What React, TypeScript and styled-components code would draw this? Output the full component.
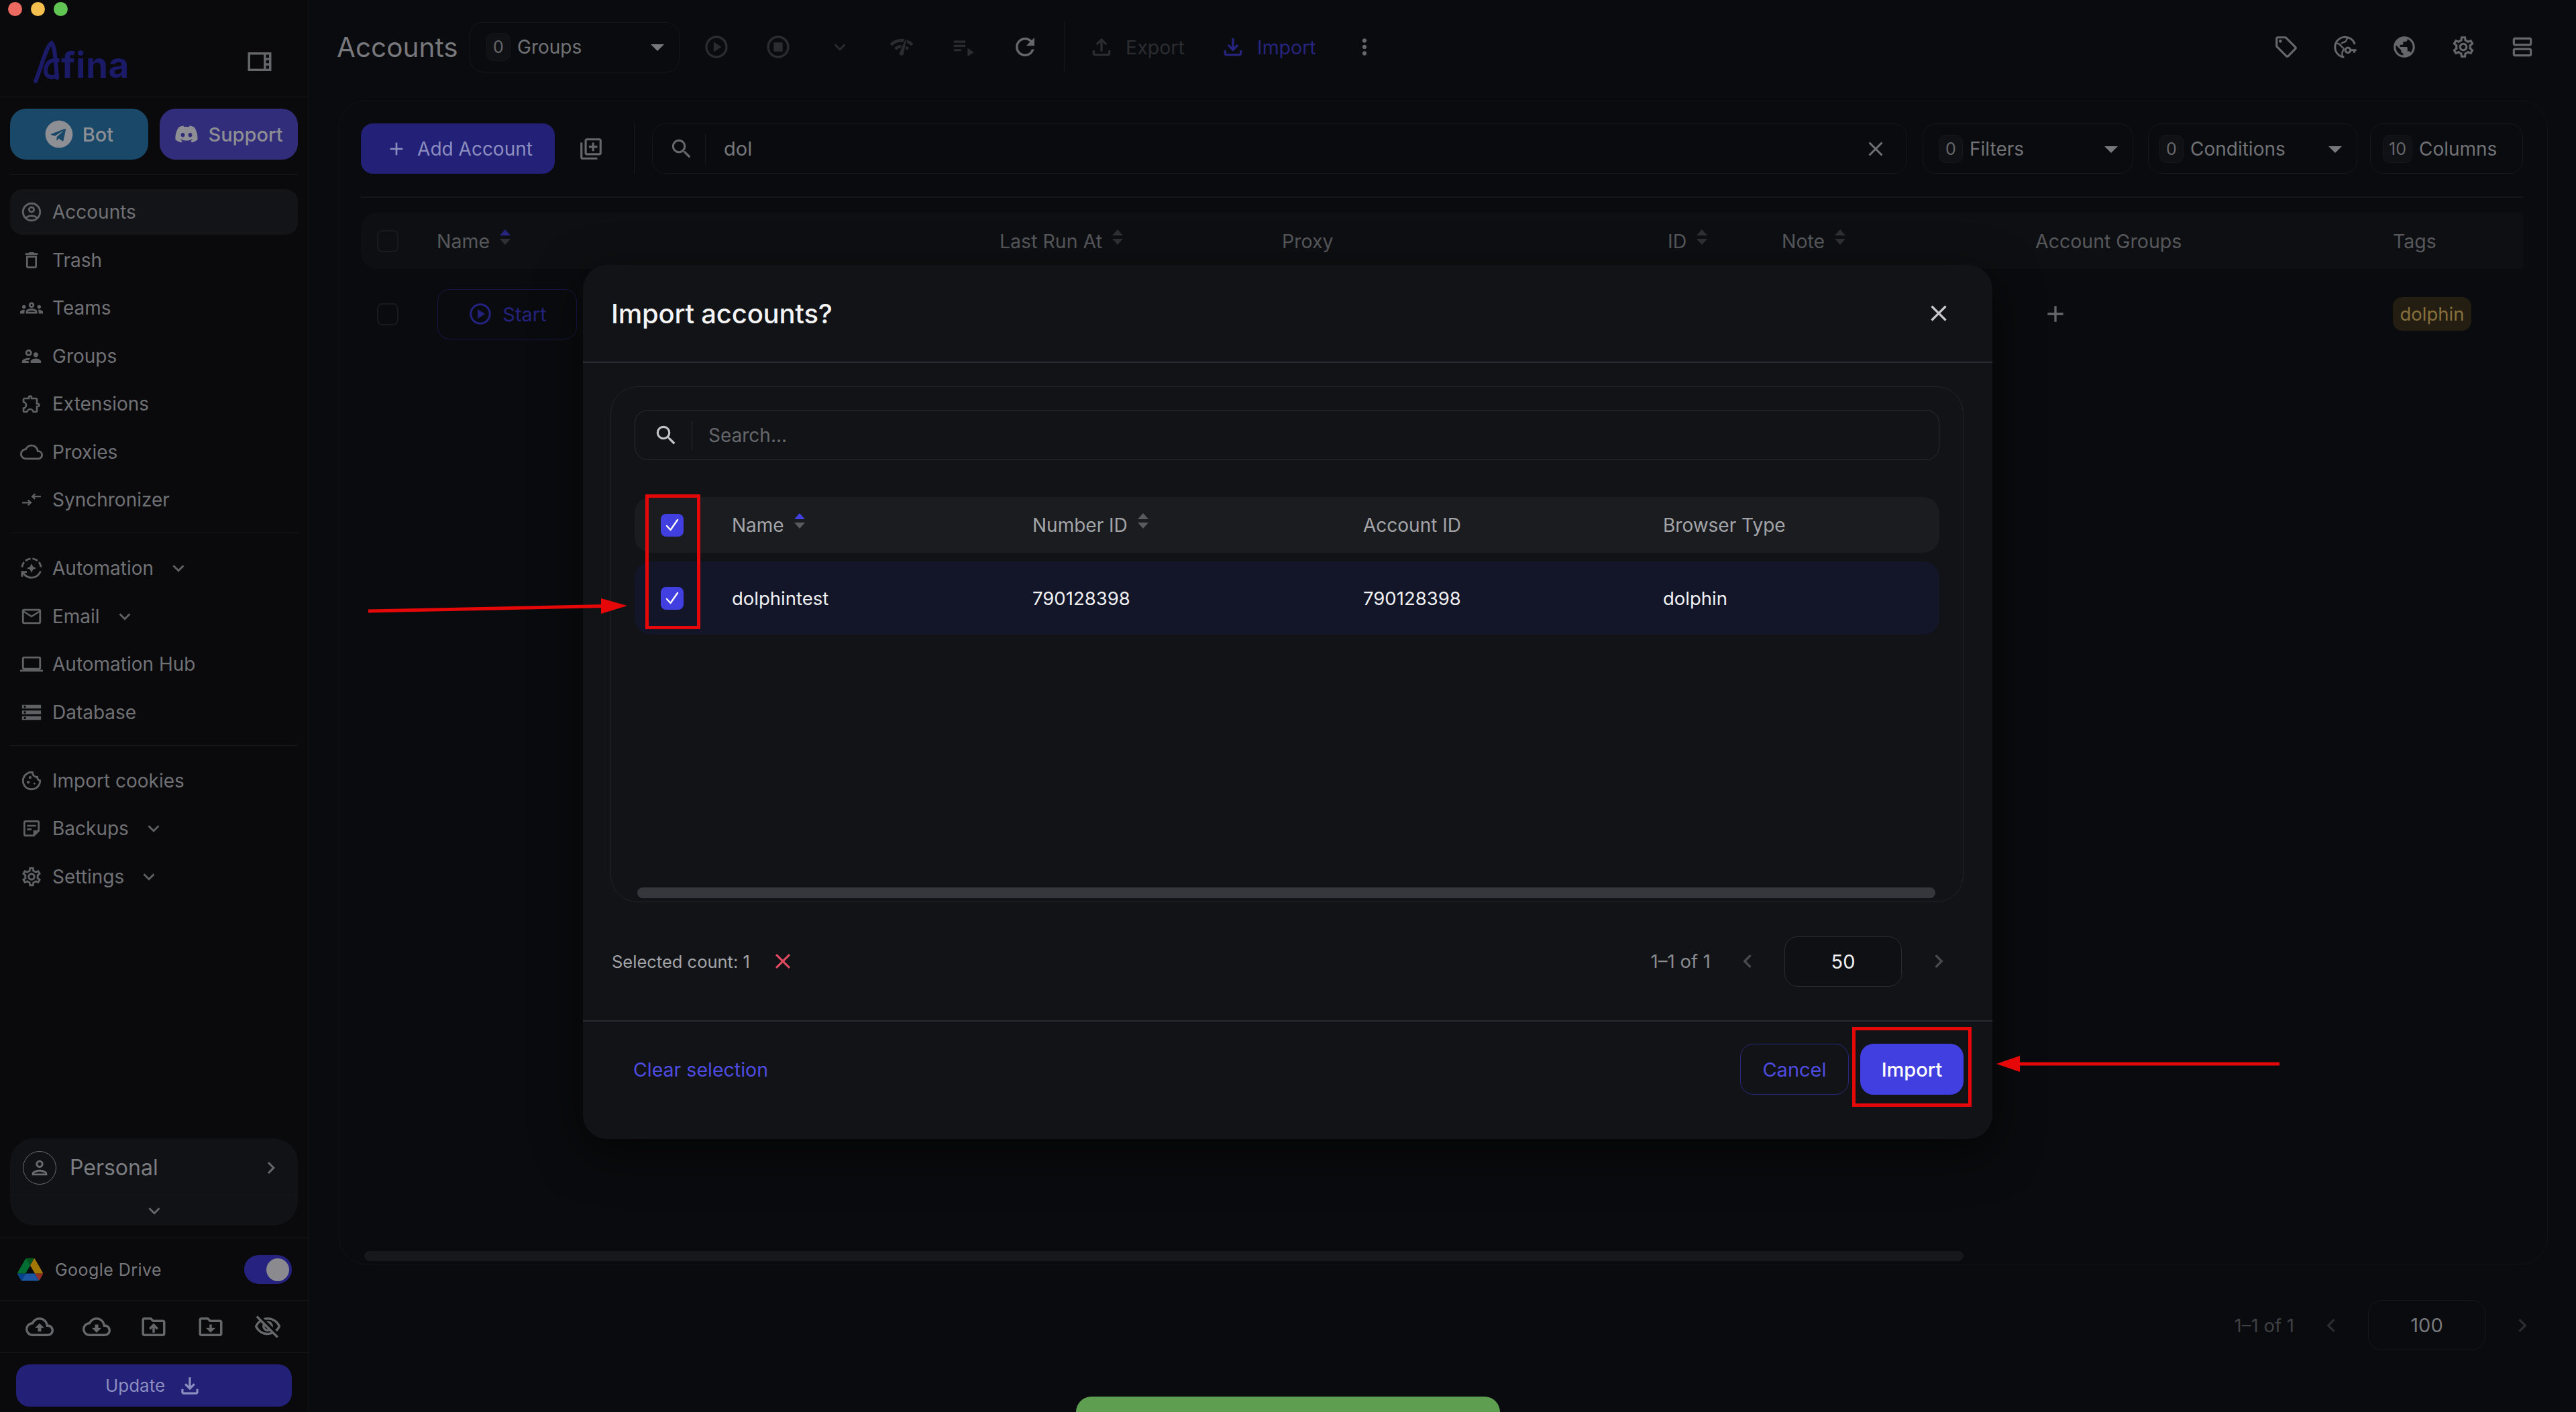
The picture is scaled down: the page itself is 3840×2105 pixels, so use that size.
import React from "react";
import styled, { createGlobalStyle } from "styled-components";
import {
  MdOutlineAccountCircle, MdOutlineDelete, MdOutlineGroups, MdOutlineSupervisorAccount, MdOutlineExtension,
  MdOutlineCloud, MdOutlineAutoMode, MdMailOutline, MdOutlineLaptop, MdOutlineStorage,
  MdOutlineCookie, MdOutlineStickyNote2, MdOutlineSettings, MdOutlineViewSidebar, MdOutlinePerson,
  MdOutlineCloudUpload, MdOutlineCloudDownload, MdOutlineDriveFolderUpload, MdOutlineVisibilityOff,
  MdOutlineFileDownload, MdOutlineFileUpload, MdOutlineLocalOffer, MdPublic, MdOutlineViewAgenda,
  MdOutlinePlayCircle, MdOutlineStopCircle, MdExpandMore, MdNetworkCheck, MdPlaylistPlay, MdRefresh,
  MdMoreVert, MdAdd, MdOutlineLibraryAdd, MdSearch, MdClose, MdChevronLeft, MdChevronRight, MdArrowDropDown,
} from "react-icons/md";
import { FaTelegram, FaDiscord } from "react-icons/fa";

const Global = createGlobalStyle`
  html, body { margin: 0; padding: 0; background: #0a0b0e; }
  body { font-family: Inter, "Noto Sans", "Liberation Sans", sans-serif; }
  * { box-sizing: border-box; }
`;

const Page = styled.div`
  position: relative; width: 3840px; height: 2105px; display: flex; overflow: hidden;
  background: #0a0b0e; color: #77787c;
`;

/* ---------- sidebar ---------- */
const Sidebar = styled.aside`
  width: 461px; height: 100%; flex: none; display: flex; flex-direction: column;
  border-right: 1px solid #15161a; background: #0a0a0d;
`;
const Lights = styled.div`display: flex; gap: 13px; padding: 3px 0 0 12px; height: 24px;`;
const Light = styled.span<{ $c: string }>`width: 21px; height: 21px; border-radius: 50%; background: ${p => p.$c};`;
const Brand = styled.div`
  height: 121px; display: flex; align-items: center; justify-content: space-between;
  padding: 16px 52px 0 50px; border-bottom: 1px solid #15161a; color: #66676b;
`;
const Logo = styled.div`display: flex; align-items: flex-end; height: 64px;`;
const LogoText = styled.span`
  font-size: 53px; font-weight: 700; color: #1b1a66; line-height: 54px; margin-left: -7px; letter-spacing: .5px;
`;
const Socials = styled.div`
  display: grid; grid-template-columns: 1fr 1fr; gap: 17px; padding: 17px 0 22px; margin: 0 16px 0 15px;
  border-bottom: 1px solid #17181c;
`;
const Social = styled.div<{ $bg: string }>`
  height: 76px; border-radius: 24px; background: ${p => p.$bg}; display: flex; align-items: center;
  justify-content: center; gap: 14px; font-size: 29px; font-weight: 500; color: #8d8f94;
`;
const NavGroup = styled.nav<{ $top?: number }>`
  display: flex; flex-direction: column; gap: 3.5px; padding: ${p => p.$top ?? 18}px 0 15px; margin: 0 16px 0 15px;
  border-bottom: 1px solid #17181c;
  &:last-of-type { border-bottom: none; }
`;
const NavItem = styled.div<{ $active?: boolean }>`
  height: 68px; display: flex; align-items: center; padding-left: 15px; gap: 14px; border-radius: 18px;
  font-size: 28px; color: #707175; background: ${p => (p.$active ? "#131417" : "transparent")};
`;
const NavIcon = styled.span`width: 34px; height: 34px; flex: none; display: flex; align-items: center; justify-content: center; color: #606165;`;
const NavChevron = styled.span`display: flex; margin-left: 6px; color: #606165;`;
const Spacer = styled.div`flex: 1;`;
const Workspace = styled.div`
  margin: 0 16px 18px 15px; height: 130px; border-radius: 36px; background: #111215; display: flex; flex-direction: column;
`;
const WorkspaceTop = styled.div`
  height: 85px; display: flex; align-items: center; padding: 3px 22px 0 19px; border-bottom: 1px solid #17181c; color: #77787c;
`;
const Avatar = styled.span`
  width: 50px; height: 50px; border: 1px solid #6b6c70; border-radius: 50%; display: flex; align-items: center;
  justify-content: center; color: #6b6c70; flex: none;
`;
const WorkspaceName = styled.span`margin-left: 20px; font-size: 32px; flex: 1; color: #7c7d81;`;
const WorkspaceBottom = styled.div`flex: 1; display: flex; align-items: center; justify-content: center; color: #66676b;`;
const SideRow = styled.div`border-top: 1px solid #15161a;`;
const DriveRow = styled(SideRow)`
  height: 93px; display: flex; align-items: center; padding: 1px 25px 0 26px; gap: 18px;
  font-size: 25px; letter-spacing: .45px; color: #77787c;
`;
const DriveLabel = styled.span`flex: 1;`;
const Toggle = styled.span`
  width: 71px; height: 43px; border-radius: 22px; background: #25237f; display: flex; align-items: center;
  justify-content: flex-end; padding-right: 4px;
`;
const Knob = styled.span`width: 34px; height: 34px; border-radius: 50%; background: #8b8b8f;`;
const SyncRow = styled(SideRow)`
  height: 78px; display: flex; align-items: center; padding-left: 38px; gap: 43px; color: #66676b;
`;
const UpdateRow = styled(SideRow)`padding: 17px 25px 8px 24px; height: 89px;`;
const UpdateButton = styled.div`
  height: 63px; border-radius: 20px; background: #232077; color: #8c8ec0; display: flex; align-items: center;
  justify-content: center; gap: 18px; font-size: 26px;
`;

/* ---------- main ---------- */
const Main = styled.main`flex: 1; min-width: 0; display: flex; flex-direction: column;`;
const TopBar = styled.header`height: 140px; flex: none; display: flex; align-items: center; padding: 0 36px 0 41px; margin-bottom: 10px;`;
const Title = styled.h1`margin: 0; font-size: 40.5px; font-weight: 400; color: #77787c; width: 198px; flex: none;`;
const Select = styled.div<{ $w: number; $h?: number }>`
  width: ${p => p.$w}px; height: 75px; flex: none; border: 1px solid #17181c; border-radius: 20px; display: flex;
  align-items: center; padding: 0 8px 0 ${p => p.$h ?? 16}px; font-size: 28px; color: #717276; background: #0a0b0e;
`;
const Count = styled.span`
  min-width: 36px; height: 42px; padding: 0 8px; border: 1px solid #16171b; border-radius: 10px; background: #101114;
  display: flex; align-items: center; justify-content: center; font-size: 25px; color: #66676b; margin-right: 10px;
`;
const SelectLabel = styled.span`flex: 1;`;
const ArrowIcon = styled.span`display: flex; color: #77787c;`;
const ToolGroup = styled.div`display: flex; margin-left: 9px;`;
const ToolButton = styled.span<{ $c?: string; $w?: number }>`
  width: ${p => p.$w ?? 92}px; height: 75px; display: flex; align-items: center; justify-content: center;
  color: ${p => p.$c ?? "#2b2c30"};
`;
const VDivider = styled.span<{ $m: string; $h?: number }>`
  width: 1px; height: ${p => p.$h ?? 75}px; background: #17181c; margin: ${p => p.$m}; flex: none;
`;
const TextTool = styled.span<{ $c: string; $w: number }>`
  display: flex; align-items: center; gap: 16px; font-size: 28.5px; color: ${p => p.$c}; width: ${p => p.$w}px; flex: none;
`;
const RightTools = styled.div`margin-left: auto; display: flex;`;

const Card = styled.section`
  margin: 0 42px 0 44px; height: 1735px; flex: none; border: 1px solid #121317; border-radius: 40px;
  padding: 34px 36px 4px 32px; display: flex; flex-direction: column; background: #0a0b0e;
`;
const Toolbar = styled.div`
  display: flex; align-items: center; height: 110px; padding-bottom: 35px; border-bottom: 2px solid #15161a; flex: none;
`;
const AddButton = styled.div`
  width: 289px; height: 75px; flex: none; border-radius: 18px; background: #232077; color: #8c8ec0; display: flex;
  align-items: center; justify-content: center; gap: 15px; font-size: 28px; padding-left: 4px;
`;
const IconBtn = styled.span`width: 118px; display: flex; justify-content: center; padding-right: 10px; color: #66676b; flex: none;`;
const SearchBox = styled.div`
  flex: 1; height: 75px; margin: 0 23px 0 26px; border: 1px solid #15161a; border-radius: 20px; display: flex;
  align-items: center; padding: 0 28px 0 24px; font-size: 29px; color: #77787c;
`;
const SearchDivider = styled.span`width: 1px; height: 48px; background: #15161a; margin: 0 27px 0 16px; flex: none;`;
const SearchValue = styled.span`flex: 1;`;
const ClearIcon = styled.span`display: flex; color: #6f7074;`;
const FilterGap = styled.span<{ $w: number }>`width: ${p => p.$w}px; flex: none;`;

const tableCols = "89px 839px 421px 575px 170px 378px 533px 1fr";
const THead = styled.div`
  margin-top: 22px; height: 84px; flex: none; display: grid; grid-template-columns: ${tableCols}; padding-left: 24px;
  align-items: center; background: #0e0f12; border-radius: 24px 0 0 24px; font-size: 28.5px; color: #56575b;
`;
const TRow = styled.div`
  height: 134px; flex: none; display: grid; grid-template-columns: ${tableCols}; padding-left: 24px; align-items: center;
`;
const Cell = styled.span`display: flex; align-items: center; gap: 15px;`;
const Box = styled.span`
  width: 32px; height: 33px; border: 2px solid #191a1e; border-radius: 8px; display: block;
`;
const SortWrap = styled.span`display: inline-flex; flex-direction: column; gap: 5px; margin-top: -12px;`;
const TriUp = styled.span<{ $c: string }>`
  width: 0; height: 0; border-left: 8px solid transparent; border-right: 8px solid transparent;
  border-bottom: 9px solid ${p => p.$c};
`;
const TriDown = styled.span<{ $c: string }>`
  width: 0; height: 0; border-left: 8px solid transparent; border-right: 8px solid transparent;
  border-top: 9px solid ${p => p.$c};
`;
const StartButton = styled.div`
  width: 208px; height: 75px; margin-left: 1px; border: 1px solid #17174a; border-radius: 18px; display: flex;
  align-items: center; justify-content: center; gap: 14px; font-size: 29px; color: #24227d;
`;
const PlusCell = styled.span`display: flex; color: #66676b; margin-left: 10px;`;
const Tag = styled.span`
  width: 117px; height: 50px; border-radius: 14px; background: #231d12; color: #87703c; font-size: 27.5px;
  display: flex; align-items: center; justify-content: center;
`;
const Scrollbar = styled.div<{ $w: number; $c: string; $h: number; $m: string }>`
  width: ${p => p.$w}px; height: ${p => p.$h}px; margin: ${p => p.$m}; flex: none; border-radius: 9px; background: ${p => p.$c};
`;
const Pager = styled.div<{ $c: string; $pr: number; $pt: number }>`
  display: flex; align-items: center; justify-content: flex-end; gap: 35px; flex: none; color: ${p => p.$c};
  padding: ${p => p.$pt}px ${p => p.$pr}px 0 0; font-size: 27.5px;
`;
const PagerChevron = styled.span<{ $c: string }>`width: 40px; display: flex; justify-content: center; color: ${p => p.$c};`;
const PerPage = styled.span<{ $b: string; $bg: string; $c: string }>`
  width: 175px; height: 75px; border: 1px solid ${p => p.$b}; border-radius: 20px; background: ${p => p.$bg};
  color: ${p => p.$c}; display: flex; align-items: center; justify-content: center; font-size: 29px;
`;
const Toast = styled.div`
  position: absolute; left: 1604px; bottom: 0; width: 632px; height: 23px; background: #5d9e50; border-radius: 32px 32px 0 0;
`;

/* ---------- modal ---------- */
const Modal = styled.div`
  position: absolute; left: 869px; top: 395px; width: 2101px; height: 1303px; background: #121317; border-radius: 36px;
  box-shadow: 0 20px 70px rgba(0,0,0,.55); display: flex; flex-direction: column;
`;
const ModalHead = styled.div`
  height: 146px; flex: none; display: flex; align-items: center; justify-content: space-between; padding: 0 60px 0 42px;
  border-bottom: 2px solid #2a2b30;
`;
const ModalTitle = styled.h2`margin: 0; font-size: 40px; font-weight: 500; color: #f4f4f5; letter-spacing: -.2px;`;
const CloseIcon = styled.span`display: flex; color: #c9c9cc;`;
const Panel = styled.div`
  margin: 35px 43px 0 41px; height: 769px; flex: none; border: 1px solid #222328; border-radius: 40px; padding: 34px 35px 5px;
  display: flex; flex-direction: column;
`;
const ModalSearch = styled.div`
  height: 75px; flex: none; border: 1px solid #2b2c31; border-radius: 20px; display: flex; align-items: center;
  padding-left: 27px; font-size: 28px; color: #66676b;
`;
const ModalSearchDivider = styled.span`width: 1px; height: 44px; background: #2b2c31; margin: 0 24px 0 19px;`;
const SearchGlyph = styled.span`display: flex; color: #c4c4c7;`;
const modalCols = "106px 448px 493px 447px 1fr";
const MHead = styled.div`
  margin-top: 55px; height: 83px; flex: none; display: grid; grid-template-columns: ${modalCols}; padding-left: 39px;
  align-items: center; background: #1b1c20; border-radius: 24px; font-size: 28px; color: #a3a4a8;
`;
const MRow = styled.div`
  margin-top: 13px; height: 109px; flex: none; display: grid; grid-template-columns: ${modalCols}; padding-left: 39px;
  align-items: center; background: #131528; border-radius: 24px; font-size: 27.5px; color: #f1f1f3;
`;
const Check = styled.span`
  width: 34px; height: 34px; border-radius: 8px; background: #413fe0; display: flex; align-items: center; justify-content: center;
`;
const PanelFill = styled.div`flex: 1;`;
const StatRow = styled.div`
  height: 178px; flex: none; display: flex; align-items: center; justify-content: space-between; padding: 0 60px 0 43px;
  border-bottom: 2px solid #2a2b30;
`;
const Selected = styled.span`display: flex; align-items: center; gap: 30px; font-size: 25.5px; color: #a3a4a8;`;
const RedX = styled.span`display: flex; color: #df4a60;`;
const ModalFoot = styled.div`
  flex: 1; display: flex; align-items: flex-start; padding: 33px 43px 0 75px; gap: 17px;
`;
const ClearLink = styled.span`flex: 1; height: 76px; display: flex; align-items: center; font-size: 28.5px; color: #4e4ce0;`;
const CancelBtn = styled.span`
  width: 162px; height: 76px; border: 1px solid #2a2980; border-radius: 20px; display: flex; align-items: center;
  justify-content: center; font-size: 29px; color: #4e4ce0;
`;
const ImportBtn = styled.span`
  width: 154px; height: 76px; border-radius: 20px; background: #413fe0; display: flex; align-items: center;
  justify-content: center; font-size: 29px; font-weight: 500; color: #fff;
`;
const Annotations = styled.svg`position: absolute; left: 0; top: 0; width: 3840px; height: 2105px; pointer-events: none;`;

const Sort = ({ active }: { active?: boolean }) => (
  <SortWrap>
    <TriUp $c={active ? "#26247f" : "#2f3034"} />
    <TriDown $c="#2f3034" />
  </SortWrap>
);
const ModalSort = ({ active }: { active?: boolean }) => (
  <SortWrap>
    <TriUp $c={active ? "#413fe0" : "#5a5b5f"} />
    <TriDown $c="#5a5b5f" />
  </SortWrap>
);

const Drive = () => (
  <svg width="38" height="35" viewBox="0 0 87.3 78" opacity=".62">
    <path d="m6.6 66.85 3.85 6.65c.8 1.4 1.95 2.5 3.3 3.3l13.75-23.8h-27.5c0 1.55.4 3.1 1.2 4.5z" fill="#0066da" />
    <path d="m43.65 25-13.75-23.8c-1.35.8-2.5 1.9-3.3 3.3l-25.4 44a9.06 9.06 0 0 0 -1.2 4.5h27.5z" fill="#00ac47" />
    <path d="m73.55 76.8c1.35-.8 2.5-1.9 3.3-3.3l1.6-2.75 7.65-13.25c.8-1.4 1.2-2.95 1.2-4.5h-27.502l5.852 11.5z" fill="#ea4335" />
    <path d="m43.65 25 13.75-23.8c-1.35-.8-2.9-1.2-4.5-1.2h-18.5c-1.6 0-3.15.45-4.5 1.2z" fill="#00832d" />
    <path d="m59.8 53h-32.3l-13.75 23.8c1.35.8 2.9 1.2 4.5 1.2h50.8c1.6 0 3.15-.45 4.5-1.2z" fill="#2684fc" />
    <path d="m73.4 26.5-12.7-22c-.8-1.4-1.95-2.5-3.3-3.3l-13.75 23.8 16.15 28h27.45c0-1.55-.4-3.1-1.2-4.5z" fill="#ffba00" />
  </svg>
);
const FolderDown = ({ size }: { size: number }) => (
  <svg width={size} height={size} viewBox="0 0 24 24" fill="currentColor">
    <path d="M20 6h-8l-2-2H4c-1.1 0-2 .9-2 2v12c0 1.1.9 2 2 2h16c1.1 0 2-.9 2-2V8c0-1.1-.9-2-2-2zm0 12H4V6h5.17l2 2H20v10z" />
    <path d="M12 17l4-4h-3v-3h-2v3H8z" />
  </svg>
);
const GlobeKey = ({ size }: { size: number }) => (
  <svg width={size} height={size} viewBox="0 0 24 24" fill="none" stroke="currentColor" strokeWidth="1.9">
    <path d="M21 9.5A9.5 9.5 0 1 0 11 21.6" />
    <path d="M4 8.5c2 .4 3 1 4 2.500s2.500 1.300 2.500 3-1.500 2-1.500 4l.5 3M14 3.500c-1 1.500-.5 2.500-2 3.500s-3 .5-3.500 2" strokeWidth="1.500" />
    <circle cx="14.500" cy="15" r="2.400" />
    <path d="M17 15h5.500M20.500 15v2.500" />
  </svg>
);
const SyncGlyph = () => (
  <svg width="30" height="30" viewBox="0 0 28 28" fill="none" stroke="currentColor" strokeWidth="2.100">
    <path d="M1 18h11M9 14.500l4 3.500-4 3.500" />
    <path d="M27 9.500H16M19 6l-4 3.500 4 3.500" />
  </svg>
);
const AfinaMark = () => (
  <svg width="48" height="64" viewBox="0 0 48 64" fill="none" stroke="#1b1a66" strokeWidth="6" strokeLinecap="round">
    <path d="M3 61C12 40 18 10 27 4c5 4 6 30 8 52" />
    <path d="M36 30c-8-2-17 2-18 14-1 9 8 15 17 8" />
  </svg>
);
function CheckGlyph() {
  return (
    <svg width="24" height="24" viewBox="0 0 24 24" fill="none" stroke="#fff" strokeWidth="2.400" strokeLinecap="round" strokeLinejoin="round">
      <path d="M4 13l5.500 6L20 4" />
    </svg>
  );
}

const nav1: [React.ReactNode, string, boolean?][] = [
  [<MdOutlineAccountCircle size={34} />, "Accounts", true],
  [<MdOutlineDelete size={32} />, "Trash"],
  [<MdOutlineGroups size={36} />, "Teams"],
  [<MdOutlineSupervisorAccount size={34} />, "Groups"],
  [<MdOutlineExtension size={32} />, "Extensions"],
  [<MdOutlineCloud size={36} />, "Proxies"],
  [<SyncGlyph />, "Synchronizer"],
];
const nav2: [React.ReactNode, string, boolean?][] = [
  [<MdOutlineAutoMode size={34} />, "Automation", true],
  [<MdMailOutline size={34} />, "Email", true],
  [<MdOutlineLaptop size={36} />, "Automation Hub"],
  [<MdOutlineStorage size={34} />, "Database"],
];
const nav3: [React.ReactNode, string, boolean?][] = [
  [<MdOutlineCookie size={34} />, "Import cookies"],
  [<MdOutlineStickyNote2 size={32} />, "Backups", true],
  [<MdOutlineSettings size={34} />, "Settings", true],
];

export default function App() {
  return (
    <Page>
      <Global />
      <Sidebar>
        <Lights>
          <Light $c="#ec6a5f" /><Light $c="#f4bf4f" /><Light $c="#61c554" />
        </Lights>
        <Brand>
          <Logo><AfinaMark /><LogoText>fina</LogoText></Logo>
          <MdOutlineViewSidebar size={42} />
        </Brand>
        <Socials>
          <Social $bg="#1a4868"><FaTelegram size={42} color="#8d8f94" />Bot</Social>
          <Social $bg="#322d7a"><FaDiscord size={36} color="#8d8f94" />Support</Social>
        </Socials>
        <NavGroup $top={21}>
          {nav1.map(([icon, label, active]) => (
            <NavItem key={label} $active={active}><NavIcon>{icon}</NavIcon>{label}</NavItem>
          ))}
        </NavGroup>
        <NavGroup>
          {nav2.map(([icon, label, more]) => (
            <NavItem key={label}><NavIcon>{icon}</NavIcon>{label}{more && <NavChevron><MdExpandMore size={34} /></NavChevron>}</NavItem>
          ))}
        </NavGroup>
        <NavGroup>
          {nav3.map(([icon, label, more]) => (
            <NavItem key={label}><NavIcon>{icon}</NavIcon>{label}{more && <NavChevron><MdExpandMore size={34} /></NavChevron>}</NavItem>
          ))}
        </NavGroup>
        <Spacer />
        <Workspace>
          <WorkspaceTop>
            <Avatar><MdOutlinePerson size={34} /></Avatar>
            <WorkspaceName>Personal</WorkspaceName>
            <MdChevronRight size={36} color="#66676b" />
          </WorkspaceTop>
          <WorkspaceBottom><MdExpandMore size={34} /></WorkspaceBottom>
        </Workspace>
        <DriveRow>
          <Drive />
          <DriveLabel>Google Drive</DriveLabel>
          <Toggle><Knob /></Toggle>
        </DriveRow>
        <SyncRow>
          <MdOutlineCloudUpload size={42} />
          <MdOutlineCloudDownload size={42} />
          <MdOutlineDriveFolderUpload size={42} />
          <FolderDown size={42} />
          <MdOutlineVisibilityOff size={42} />
        </SyncRow>
        <UpdateRow>
          <UpdateButton>Update<MdOutlineFileDownload size={38} /></UpdateButton>
        </UpdateRow>
      </Sidebar>

      <Main>
        <TopBar>
          <Title>Accounts</Title>
          <Select $w={313} $h={24}>
            <Count>0</Count><SelectLabel>Groups</SelectLabel>
            <ArrowIcon><MdArrowDropDown size={48} /></ArrowIcon>
          </Select>
          <ToolGroup>
            <ToolButton><MdOutlinePlayCircle size={40} /></ToolButton>
            <ToolButton><MdOutlineStopCircle size={40} /></ToolButton>
            <ToolButton><MdExpandMore size={34} /></ToolButton>
            <ToolButton><MdNetworkCheck size={38} /></ToolButton>
            <ToolButton><MdPlaylistPlay size={38} /></ToolButton>
            <ToolButton $c="#66676b"><MdRefresh size={42} /></ToolButton>
          </ToolGroup>
          <VDivider $m="0 35px 0 12px" />
          <TextTool $c="#2b2c30" $w={196}><MdOutlineFileUpload size={40} />Export</TextTool>
          <TextTool $c="#26247f" $w={196}><MdOutlineFileDownload size={40} />Import</TextTool>
          <ToolButton $c="#66676b" $w={40}><MdMoreVert size={38} /></ToolButton>
          <RightTools>
            <ToolButton $c="#66676b" $w={88}><MdOutlineLocalOffer size={38} /></ToolButton>
            <ToolButton $c="#66676b" $w={88}><GlobeKey size={38} /></ToolButton>
            <ToolButton $c="#66676b" $w={88}><MdPublic size={38} /></ToolButton>
            <ToolButton $c="#66676b" $w={88}><MdOutlineSettings size={38} /></ToolButton>
            <ToolButton $c="#66676b" $w={88}><MdOutlineViewAgenda size={38} /></ToolButton>
          </RightTools>
        </TopBar>

        <Card>
          <Toolbar>
            <AddButton><MdAdd size={32} />Add Account</AddButton>
            <IconBtn><MdOutlineLibraryAdd size={38} /></IconBtn>
            <VDivider $m="0" />
            <SearchBox>
              <MdSearch size={38} color="#66676b" />
              <SearchDivider />
              <SearchValue>dol</SearchValue>
              <ClearIcon><MdClose size={36} /></ClearIcon>
            </SearchBox>
            <Select $w={314} $h={23}><Count>0</Count><SelectLabel>Filters</SelectLabel><ArrowIcon><MdArrowDropDown size={48} /></ArrowIcon></Select>
            <FilterGap $w={22} />
            <Select $w={312} $h={16}><Count>0</Count><SelectLabel>Conditions</SelectLabel><ArrowIcon><MdArrowDropDown size={48} /></ArrowIcon></Select>
            <FilterGap $w={19} />
            <Select $w={228} $h={18}><Count>10</Count><SelectLabel>Columns</SelectLabel></Select>
          </Toolbar>
          <THead>
            <Box />
            <Cell>Name<Sort active /></Cell>
            <Cell>Last Run At<Sort /></Cell>
            <Cell>Proxy</Cell>
            <Cell>ID<Sort /></Cell>
            <Cell>Note<Sort /></Cell>
            <Cell>Account Groups</Cell>
            <Cell>Tags</Cell>
          </THead>
          <TRow>
            <Box />
            <StartButton><MdOutlinePlayCircle size={38} />Start</StartButton>
            <span /><span /><span /><span />
            <PlusCell><MdAdd size={40} /></PlusCell>
            <Tag>dolphin</Tag>
          </TRow>
          <Spacer />
          <Scrollbar $w={2384} $h={15} $c="#17181c" $m="0 0 0 5px" />
        </Card>
        <Pager $c="#3f4044" $pr={60} $pt={53}>
          <span>1–1 of 1</span>
          <PagerChevron $c="#2b2c30"><MdChevronLeft size={40} /></PagerChevron>
          <PerPage $b="#17181c" $bg="#0a0b0e" $c="#77787c">100</PerPage>
          <PagerChevron $c="#2b2c30"><MdChevronRight size={40} /></PagerChevron>
        </Pager>
      </Main>

      <Toast />

      <Modal>
        <ModalHead>
          <ModalTitle>Import accounts?</ModalTitle>
          <CloseIcon><MdClose size={40} /></CloseIcon>
        </ModalHead>
        <Panel>
          <ModalSearch>
            <SearchGlyph><MdSearch size={38} /></SearchGlyph>
            <ModalSearchDivider />
            Search...
          </ModalSearch>
          <MHead>
            <Check><CheckGlyph /></Check>
            <Cell>Name<ModalSort active /></Cell>
            <Cell>Number ID<ModalSort /></Cell>
            <Cell>Account ID</Cell>
            <Cell>Browser Type</Cell>
          </MHead>
          <MRow>
            <Check><CheckGlyph /></Check>
            <span>dolphintest</span>
            <span>790128398</span>
            <span>790128398</span>
            <span>dolphin</span>
          </MRow>
          <PanelFill />
          <Scrollbar $w={1935} $h={16} $c="#36373c" $m="0 0 0 4px" />
        </Panel>
        <StatRow>
          <Selected>Selected count: 1<RedX><MdClose size={38} /></RedX></Selected>
          <Pager $c="#8a8b8f" $pr={0} $pt={0}>
            <span>1–1 of 1</span>
            <PagerChevron $c="#4a4b4f"><MdChevronLeft size={40} /></PagerChevron>
            <PerPage $b="#2b2c31" $bg="#0f1013" $c="#f1f1f3">50</PerPage>
            <PagerChevron $c="#4a4b4f"><MdChevronRight size={40} /></PagerChevron>
          </Pager>
        </StatRow>
        <ModalFoot>
          <ClearLink>Clear selection</ClearLink>
          <CancelBtn>Cancel</CancelBtn>
          <ImportBtn>Import</ImportBtn>
        </ModalFoot>
      </Modal>

      <Annotations viewBox="0 0 3840 2105" fill="none">
        <rect x="964.500" y="739.500" width="77" height="196" stroke="#e60808" strokeWidth="5" />
        <rect x="2763.500" y="1533.500" width="173" height="114" stroke="#e60808" strokeWidth="5" />
        <path d="M549 911 900 903.500" stroke="#e60808" strokeWidth="5" />
        <path d="M935 903 896 892v23z" fill="#e60808" />
        <path d="M3398 1586H3005" stroke="#e60808" strokeWidth="5" />
        <path d="M2976 1586l35-12v24z" fill="#e60808" />
      </Annotations>
    </Page>
  );
}
